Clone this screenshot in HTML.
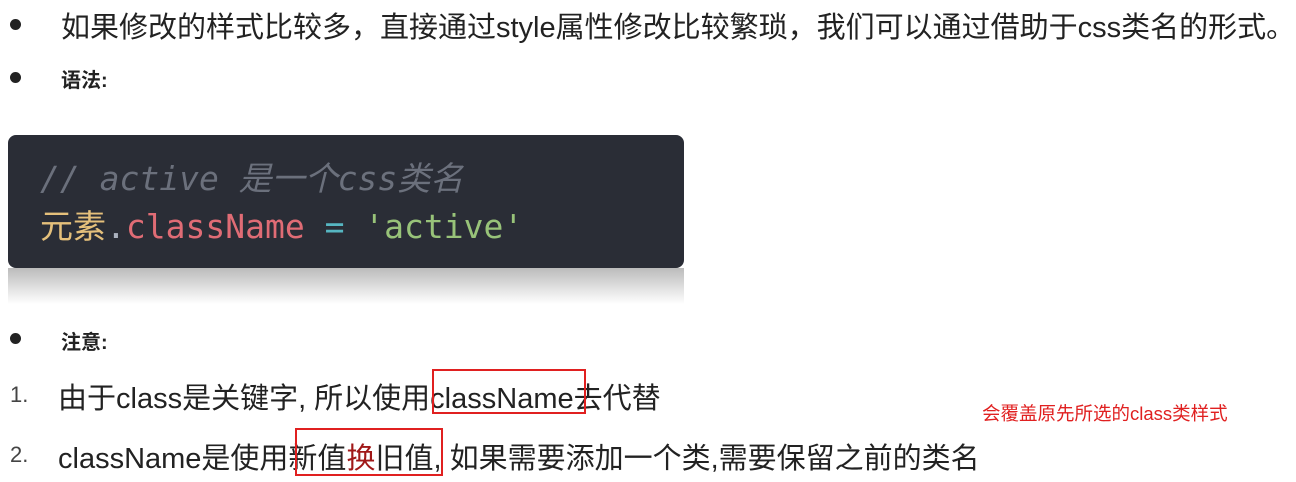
<!DOCTYPE html>
<html><head><meta charset="utf-8"><style>
body{margin:0;width:1296px;height:482px;background:#fff;position:relative;overflow:hidden;font-family:"Liberation Sans","Noto Sans CJK SC",sans-serif;color:#222}
.a{position:absolute;white-space:nowrap}
.dot{position:absolute;width:11px;height:11px;border-radius:50%;background:#222}
.code{position:absolute;left:8px;top:135px;width:676px;height:133px;background:#2a2d36;border-radius:8px}
.refl{position:absolute;left:8px;top:268px;width:676px;height:36px;background:linear-gradient(#bbb,#fff)}
.mono{font-family:"DejaVu Sans Mono","Noto Sans CJK SC",monospace;font-size:33px}
.box{position:absolute;border:2px solid #e02020}
</style></head><body>
<div class="dot" style="left:10px;top:19px"></div>
<div class="a" style="left:61px;top:4px;font-size:29px">如果修改的样式比较多，直接通过style属性修改比较繁琐，我们可以通过借助于css类名的形式。</div>
<div class="dot" style="left:10px;top:72px"></div>
<div class="a" style="left:61px;top:64px;font-size:20px;font-weight:bold">语法:</div>
<div class="code"></div>
<div class="refl"></div>
<div class="a mono" style="left:40px;top:152px;color:#6b707c;font-style:italic">// active 是一个css类名</div>
<div class="a mono" style="left:40px;top:200px"><span style="color:#e5c07b">元素</span><span style="color:#abb2bf">.</span><span style="color:#e06c75">className</span> <span style="color:#56b6c2">=</span> <span style="color:#98c379">'active'</span></div>
<div class="dot" style="left:10px;top:333px"></div>
<div class="a" style="left:61px;top:326px;font-size:20px;font-weight:bold">注意:</div>
<div class="a" style="left:10px;top:382px;font-size:22px;color:#444">1.</div>
<div class="a" style="left:58px;top:375px;font-size:29px">由于class是关键字, 所以使用className去代替</div>
<div class="a" style="left:10px;top:442px;font-size:22px;color:#444">2.</div>
<div class="a" style="left:58px;top:435px;font-size:29px">className是使用新值<span style="color:#a01818">换</span>旧值, 如果需要添加一个类,需要保留之前的类名</div>
<div class="box" style="left:432px;top:369px;width:150px;height:41px"></div>
<div class="box" style="left:295px;top:428px;width:144px;height:44px"></div>
<div class="a" style="left:982px;top:400px;font-size:18.5px;color:#e02020">会覆盖原先所选的class类样式</div>
</body></html>
